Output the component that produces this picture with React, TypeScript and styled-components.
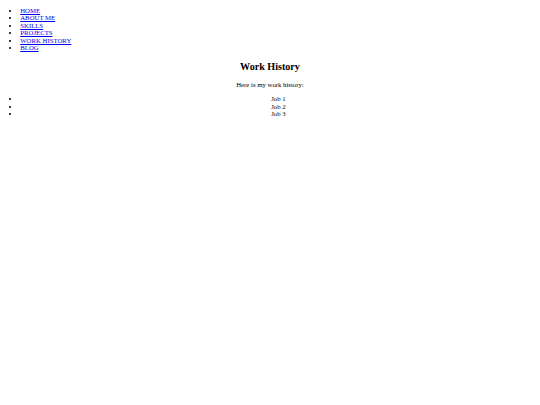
import styled, { createGlobalStyle } from 'styled-components';

// The reference is a 1280px-wide default-styled page shown at 540px,
// so every default size is scaled by 540 / 1280.
const S = 540 / 1280;
const px = (n: number) => `${(n * S).toFixed(3)}px`;

const NAV_ITEMS = ['HOME', 'ABOUT ME', 'SKILLS', 'PROJECTS', 'WORK HISTORY', 'BLOG'];
const JOBS = ['Job 1', 'Job 2', 'Job 3'];

const GlobalStyle = createGlobalStyle`
  html, body {
    background: #fff;
  }
  body {
    margin: 0;
    padding: 0 ${px(8)};
    font-family: 'Liberation Serif', 'Times New Roman', serif;
    font-size: ${px(16)};
    line-height: 7.5px;
    color: #000;
  }
`;

const App = () => {
  return (
    <>
      <GlobalStyle />
      <Nav>
        <NavList>
          {NAV_ITEMS.map((item) => (
            <NavItem key={item}>
              <NavLink href="#">{item}</NavLink>
            </NavItem>
          ))}
        </NavList>
      </Nav>

      <Section>
        <Title>Work History</Title>
        <Intro>Here is my work history:</Intro>
        <JobList>
          {JOBS.map((job) => (
            <JobItem key={job}>{job}</JobItem>
          ))}
        </JobList>
      </Section>
    </>
  );
};

export default App;

const Nav = styled.nav`
  display: block;
  padding-top: 6.5px;
`;

const NavList = styled.ul`
  margin: 0 0 ${px(16)};
  padding-left: ${px(40)};
  list-style: disc;
`;

const NavItem = styled.li`
  height: 7.5px;
`;

const NavLink = styled.a`
  color: #0000ee;
  text-decoration: underline;
`;

const Section = styled.section`
  text-align: center;
`;

const Title = styled.h2`
  margin: 9.4px 0 ${px(19.92)};
  font-size: ${px(24)};
  line-height: 11.5px;
  font-weight: bold;
`;

const Intro = styled.p`
  margin: ${px(16)} 0;
`;

const JobList = styled.ul`
  margin: ${px(16)} 0;
  padding-left: ${px(40)};
  list-style: disc;
`;

const JobItem = styled.li`
  height: 7.5px;
`;
